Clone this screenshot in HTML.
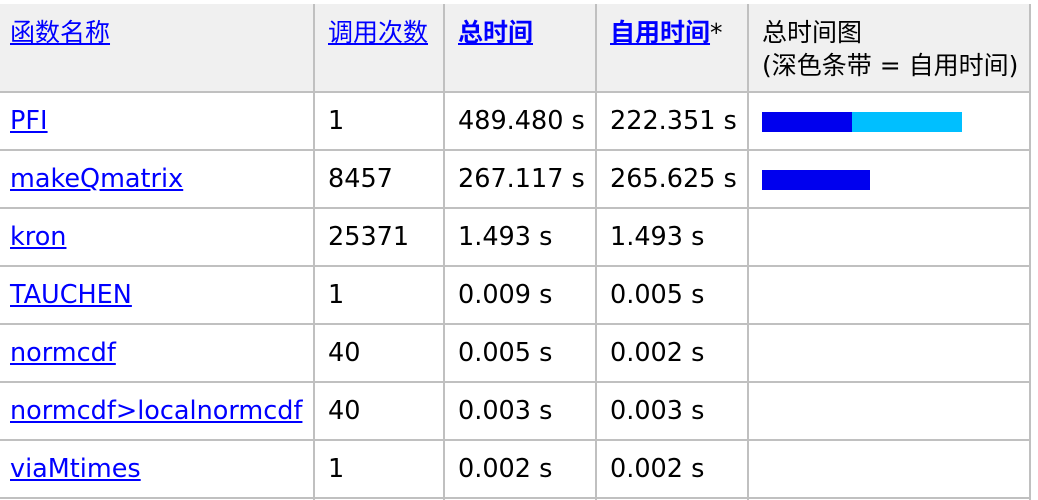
<!DOCTYPE html>
<html><head><meta charset="utf-8"><style>
body{margin:0;width:1038px;height:500px;background:#fff;overflow:hidden;font-family:"DejaVu Sans","Liberation Sans","Noto Sans CJK SC",sans-serif;font-size:25.5px;color:#000;position:relative}
.hb{position:absolute;left:0;top:4px;width:1030px;height:87px;background:#f0f0f0}
.h{position:absolute;left:0;width:1030px;height:2px;background:#c0c0c0}
.v{position:absolute;top:4px;width:2px;height:496px;background:#c0c0c0}
.t{position:absolute;white-space:nowrap;line-height:30px}
.hd{font-size:25px;line-height:33px}
a{color:#00f;text-decoration:underline}
.b{font-weight:bold}
</style></head><body>
<div class="hb"></div>
<div class="h" style="top:91px"></div>
<div class="h" style="top:149px"></div>
<div class="h" style="top:207px"></div>
<div class="h" style="top:265px"></div>
<div class="h" style="top:323px"></div>
<div class="h" style="top:381px"></div>
<div class="h" style="top:439px"></div>
<div class="h" style="top:497px"></div>
<div class="v" style="left:313px"></div>
<div class="v" style="left:443px"></div>
<div class="v" style="left:595px"></div>
<div class="v" style="left:747px"></div>
<div class="v" style="left:1029px"></div>

<div class="t hd" style="left:10px;top:16px"><a>函数名称</a></div>
<div class="t hd" style="left:328px;top:16px"><a>调用次数</a></div>
<div class="t hd b" style="left:458px;top:16px"><a>总时间</a></div>
<div class="t hd" style="left:610px;top:16px"><a class="b">自用时间</a>*</div>
<div class="t hd" style="left:762px;top:16px">总时间图<br>(深色条带 = 自用时间)</div>

<div style="position:absolute;left:762px;top:112px;width:90px;height:20px;background:#0000ee"></div>
<div style="position:absolute;left:852px;top:112px;width:110px;height:20px;background:#00bfff"></div>
<div style="position:absolute;left:762px;top:170px;width:108px;height:20px;background:#0000ee"></div>

<div class="t" style="left:10px;top:106px"><a>PFI</a></div>
<div class="t" style="left:328px;top:106px">1</div>
<div class="t" style="left:458px;top:106px">489.480 s</div>
<div class="t" style="left:610px;top:106px">222.351 s</div>

<div class="t" style="left:10px;top:164px"><a>makeQmatrix</a></div>
<div class="t" style="left:328px;top:164px">8457</div>
<div class="t" style="left:458px;top:164px">267.117 s</div>
<div class="t" style="left:610px;top:164px">265.625 s</div>

<div class="t" style="left:10px;top:222px"><a>kron</a></div>
<div class="t" style="left:328px;top:222px">25371</div>
<div class="t" style="left:458px;top:222px">1.493 s</div>
<div class="t" style="left:610px;top:222px">1.493 s</div>

<div class="t" style="left:10px;top:280px"><a>TAUCHEN</a></div>
<div class="t" style="left:328px;top:280px">1</div>
<div class="t" style="left:458px;top:280px">0.009 s</div>
<div class="t" style="left:610px;top:280px">0.005 s</div>

<div class="t" style="left:10px;top:338px"><a>normcdf</a></div>
<div class="t" style="left:328px;top:338px">40</div>
<div class="t" style="left:458px;top:338px">0.005 s</div>
<div class="t" style="left:610px;top:338px">0.002 s</div>

<div class="t" style="left:10px;top:396px"><a>normcdf&gt;localnormcdf</a></div>
<div class="t" style="left:328px;top:396px">40</div>
<div class="t" style="left:458px;top:396px">0.003 s</div>
<div class="t" style="left:610px;top:396px">0.003 s</div>

<div class="t" style="left:10px;top:454px"><a>viaMtimes</a></div>
<div class="t" style="left:328px;top:454px">1</div>
<div class="t" style="left:458px;top:454px">0.002 s</div>
<div class="t" style="left:610px;top:454px">0.002 s</div>
</body></html>
